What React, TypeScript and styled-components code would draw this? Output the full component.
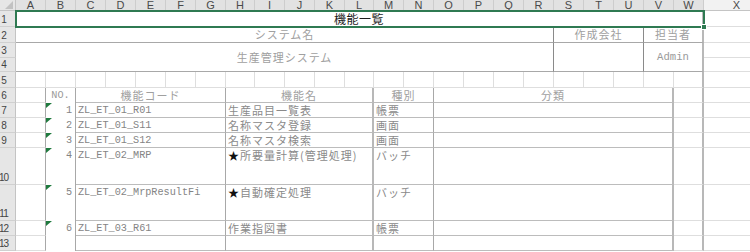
import React from "react";
import styled, { createGlobalStyle, css } from "styled-components";

// Sheet geometry: column widths for A..X and row heights for rows 1..13.
const COLUMN_WIDTHS = [30, 30, 30, 30, 30, 30, 30, 29, 30, 30, 30, 29, 30, 30, 30, 30, 30, 30, 30, 30, 30, 30, 30, 66];
const COLUMN_NAMES = "ABCDEFGHIJKLMNOPQRSTUVWX".split("");
const ROW_HEIGHTS = [16, 16, 15, 14, 16, 15, 15, 15, 15, 37, 36, 15, 15];

// Grid column index of a sheet column letter (column 1 holds the row headers).
const col = (letter: string) => COLUMN_NAMES.indexOf(letter) + 2;
// Grid row index of a sheet row number (row 1 holds the column headers).
const row = (n: number) => n + 1;

type Line = "none" | "grid" | "rule" | "mid" | "dark" | "strong";

const LINES: Record<Line, string> = {
  none: "0 solid transparent",
  grid: "1px solid #dedede",
  rule: "1px solid #bcbcbc",
  mid: "1px solid #a8a8a8",
  dark: "1px solid #8a8a8a",
  strong: "2px solid #b8b8b8",
};

type FunctionRow = { no: string; code: string; name: string; star?: boolean; kind: string };

const FUNCTIONS: FunctionRow[] = [
  { no: "1", code: "ZL_ET_01_R01", name: "生産品目一覧表", kind: "帳票" },
  { no: "2", code: "ZL_ET_01_S11", name: "名称マスタ登録", kind: "画面" },
  { no: "3", code: "ZL_ET_01_S12", name: "名称マスタ検索", kind: "画面" },
  { no: "4", code: "ZL_ET_02_MRP", name: "所要量計算(管理処理)", star: true, kind: "バッチ" },
  { no: "5", code: "ZL_ET_02_MrpResultFi", name: "自動確定処理", star: true, kind: "バッチ" },
  { no: "6", code: "ZL_ET_03_R61", name: "作業指図書", kind: "帳票" },
  { no: "", code: "", name: "", kind: "" },
];

const GlobalStyle = createGlobalStyle`
  html, body {
    margin: 0;
    padding: 0;
    background: #ffffff;
  }
  body {
    width: 750px;
    height: 252px;
    overflow: hidden;
    font-family: "Noto Sans CJK JP", sans-serif;
  }
`;

const Sheet = styled.div`
  display: grid;
  grid-template-columns: 16px ${COLUMN_WIDTHS.map((w) => `${w}px`).join(" ")};
  grid-template-rows: 11px ${ROW_HEIGHTS.map((h) => `${h}px`).join(" ")} 12px;
  width: max-content;
  background: #ffffff;
`;

const Corner = styled.div`
  grid-column: 1;
  grid-row: 1;
  background: #e6e6e6;
  border-right: 1px solid #c4c4c4;
  border-bottom: 1px solid #c4c4c4;
  svg {
    display: block;
  }
`;

const ColHead = styled.div<{ $col: number; $active: boolean }>`
  grid-column: ${(p) => p.$col};
  grid-row: 1;
  background: ${(p) => (p.$active ? "#e2e2e2" : "#f2f2f2")};
  border-right: 1px solid #cdcdcd;
  border-bottom: 1px solid #c4c4c4;
  font: 11px/10px "Liberation Sans", Arial, sans-serif;
  color: #4a4a4a;
  text-align: center;
  overflow: hidden;
`;

const RowHead = styled.div<{ $row: number }>`
  grid-column: 1;
  grid-row: ${(p) => p.$row};
  background: #e6e6e6;
  border-right: 1px solid #c4c4c4;
  border-bottom: 1px solid #d0d0d0;
  display: flex;
  align-items: flex-end;
  justify-content: center;
  padding-right: 8px;
  font: 10px/13px "Liberation Sans", Arial, sans-serif;
  letter-spacing: -1px;
  color: #444444;
  white-space: nowrap;
`;

type CellProps = {
  $col: number;
  $span?: number;
  $row: number;
  $rows?: number;
  $right?: Line;
  $bottom?: Line;
  $align?: "left" | "center" | "right";
  $middle?: boolean;
  $flag?: boolean;
};

const Cell = styled.div<CellProps>`
  grid-column: ${(p) => p.$col} / span ${(p) => p.$span ?? 1};
  grid-row: ${(p) => p.$row} / span ${(p) => p.$rows ?? 1};
  position: relative;
  display: flex;
  align-items: ${(p) => (p.$middle ? "center" : "flex-start")};
  justify-content: ${(p) =>
    p.$align === "center" ? "center" : p.$align === "right" ? "flex-end" : "flex-start"};
  padding-left: ${(p) => (p.$align === "left" ? "2px" : "0")};
  padding-right: ${(p) => (p.$align === "right" ? "3px" : "0")};
  border-right: ${(p) => LINES[p.$right ?? "grid"]};
  border-bottom: ${(p) => LINES[p.$bottom ?? "grid"]};
  overflow: hidden;
  white-space: nowrap;
  line-height: 15px;
  ${(p) =>
    p.$flag &&
    css`
      &::before {
        content: "";
        position: absolute;
        left: 0;
        top: 0;
        border-style: solid;
        border-width: 5px 6px 0 0;
        border-color: #1f7a3e transparent transparent transparent;
      }
    `}
`;

const Selection = styled.div`
  grid-column: 2 / span 23;
  grid-row: 2;
  margin: -1px;
  border: 2px solid #2f7a52;
  position: relative;
  z-index: 2;
  pointer-events: none;
`;

const FillHandle = styled.span`
  position: absolute;
  right: -4px;
  bottom: -4px;
  width: 4px;
  height: 4px;
  background: #2f7a52;
  border: 1px solid #ffffff;
`;

const Title = styled.span`
  font-family: "Noto Sans CJK JP", sans-serif;
  font-size: 12px;
  letter-spacing: 0.5px;
  color: #1c1c1c;
`;

const Jp = styled.span<{ $soft?: boolean }>`
  font-family: "Noto Sans CJK JP", sans-serif;
  font-size: 11px;
  letter-spacing: 1px;
  color: ${(p) => (p.$soft ? "#a0a0a0" : "#8a8a8a")};
`;

const Star = styled.span`
  color: #111111;
`;

const Code = styled.span<{ $soft?: boolean; $wide?: boolean }>`
  font-family: "Liberation Mono", "DejaVu Sans Mono", monospace;
  font-size: ${(p) => (p.$wide ? "10.6px" : "10.2px")};
  color: ${(p) => (p.$soft ? "#9a9a9a" : "#848484")};
`;

function Headers() {
  return (
    <>
      <Corner>
        <svg width="15" height="10" viewBox="0 0 15 10">
          <polygon points="13,1 13,9 5,9" fill="#c2c2c2" />
        </svg>
      </Corner>
      {COLUMN_NAMES.map((name) => (
        <ColHead key={name} $col={col(name)} $active={name !== "X"}>
          {name}
        </ColHead>
      ))}
      {ROW_HEIGHTS.map((_, i) => (
        <RowHead key={i} $row={row(i + 1)}>
          {i + 1}
        </RowHead>
      ))}
    </>
  );
}

function SummaryBlock() {
  return (
    <>
      <Cell $col={col("A")} $span={23} $row={row(1)} $right="strong" $align="center" $middle>
        <Title>機能一覧</Title>
      </Cell>
      <Selection>
        <FillHandle />
      </Selection>

      <Cell $col={col("A")} $span={18} $row={row(2)} $right="dark" $bottom="mid" $align="center" $middle>
        <Jp $soft>システム名</Jp>
      </Cell>
      <Cell $col={col("S")} $span={3} $row={row(2)} $right="dark" $bottom="mid" $align="center" $middle>
        <Jp $soft>作成会社</Jp>
      </Cell>
      <Cell $col={col("V")} $span={2} $row={row(2)} $right="strong" $bottom="mid" $align="center" $middle>
        <Jp $soft>担当者</Jp>
      </Cell>

      <Cell $col={col("A")} $span={18} $row={row(3)} $rows={2} $right="dark" $bottom="mid" $align="center" $middle>
        <Jp $soft>生産管理システム</Jp>
      </Cell>
      <Cell $col={col("S")} $span={3} $row={row(3)} $rows={2} $right="dark" $bottom="mid" />
      <Cell $col={col("V")} $span={2} $row={row(3)} $rows={2} $right="strong" $bottom="mid" $align="center" $middle>
        <Code $soft $wide>Admin</Code>
      </Cell>

      {[1, 2, 3, 4].map((r) => (
        <Cell key={`x${r}`} $col={col("X")} $row={row(r)} />
      ))}

      {COLUMN_NAMES.map((name) => (
        <Cell key={`r5${name}`} $col={col(name)} $row={row(5)} $right={name === "W" ? "strong" : "grid"} />
      ))}
    </>
  );
}

function FunctionTable() {
  return (
    <>
      <Cell $col={col("A")} $row={row(6)} $right="mid" />
      <Cell $col={col("B")} $row={row(6)} $right="mid" $bottom="none" $align="center">
        <Code $soft>NO.</Code>
      </Cell>
      <Cell $col={col("C")} $span={5} $row={row(6)} $right="mid" $bottom="rule" $align="center">
        <Jp $soft>機能コード</Jp>
      </Cell>
      <Cell $col={col("H")} $span={5} $row={row(6)} $right="strong" $bottom="rule" $align="center">
        <Jp $soft>機能名</Jp>
      </Cell>
      <Cell $col={col("M")} $span={2} $row={row(6)} $right="mid" $bottom="rule" $align="center">
        <Jp $soft>種別</Jp>
      </Cell>
      <Cell $col={col("O")} $span={8} $row={row(6)} $right="strong" $bottom="rule" $align="center">
        <Jp $soft>分類</Jp>
      </Cell>
      <Cell $col={col("W")} $row={row(6)} $right="strong" />
      <Cell $col={col("X")} $row={row(6)} />

      {FUNCTIONS.map((f, i) => {
        const r = row(7 + i);
        return (
          <React.Fragment key={r}>
            <Cell $col={col("A")} $row={r} $right="mid" />
            <Cell $col={col("B")} $row={r} $right="mid" $bottom="none" $align="right" $flag={f.no !== ""}>
              <Code>{f.no}</Code>
            </Cell>
            <Cell $col={col("C")} $span={5} $row={r} $right="mid" $bottom="rule" $align="left">
              <Code>{f.code}</Code>
            </Cell>
            <Cell $col={col("H")} $span={5} $row={r} $right="strong" $bottom="rule" $align="left">
              <Jp>
                {f.star && <Star>★</Star>}
                {f.name}
              </Jp>
            </Cell>
            <Cell $col={col("M")} $span={2} $row={r} $right="mid" $bottom="rule" $align="left">
              <Jp>{f.kind}</Jp>
            </Cell>
            <Cell $col={col("O")} $span={8} $row={r} $right="strong" $bottom="rule" />
            <Cell $col={col("W")} $row={r} $right="strong" />
            <Cell $col={col("X")} $row={r} />
          </React.Fragment>
        );
      })}
    </>
  );
}

export default function App() {
  return (
    <>
      <GlobalStyle />
      <Sheet>
        <Headers />
        <SummaryBlock />
        <FunctionTable />
      </Sheet>
    </>
  );
}
